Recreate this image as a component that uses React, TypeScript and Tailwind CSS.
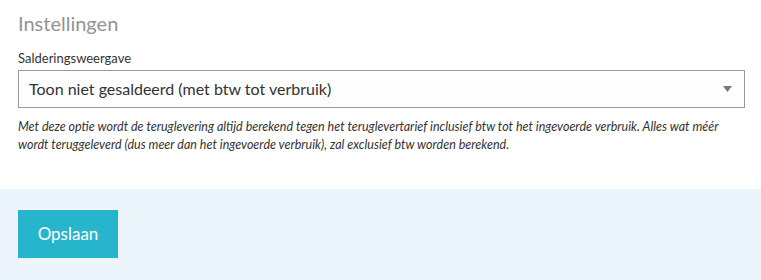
import React from 'react';

export default function App() {
  return (
    <div className="w-[761px] h-[280px] bg-white font-['Lato','Liberation_Sans',sans-serif] flex flex-col">
      <section className="px-[18px] pt-[10px] h-[189px]">
        <h2 className="text-[20px] font-normal text-[#939393] leading-[26px]">Instellingen</h2>
        <label className="block mt-[14px] text-[13px] text-[#333] leading-[16px]">Salderingsweergave</label>
        <div className="mt-[4px] w-[727px] h-[38px] border border-[#999] bg-[#fdfdfd] flex items-center justify-between pl-[10px] pr-[12px]">
          <span className="text-[16px] text-[#333]">Toon niet gesaldeerd (met btw tot verbruik)</span>
          <svg width="9" height="6" viewBox="0 0 9 6">
            <path d="M0 0h9L4.5 6z" fill="#777" />
          </svg>
        </div>
        <p className="mt-[10px] text-[12.5px] italic text-[#333] leading-[18px] w-[725px]">
          Met deze optie wordt de teruglevering altijd berekend tegen het teruglevertarief inclusief btw tot het ingevoerde verbruik. Alles wat méér wordt teruggeleverd (dus meer dan het ingevoerde verbruik), zal exclusief btw worden berekend.
        </p>
      </section>
      <section className="flex-1 bg-[#edf5fc] px-[18px] pt-[21px]">
        <button className="w-[100px] h-[48px] bg-[#26b5cb] text-white text-[17px]">Opslaan</button>
      </section>
    </div>
  );
}
